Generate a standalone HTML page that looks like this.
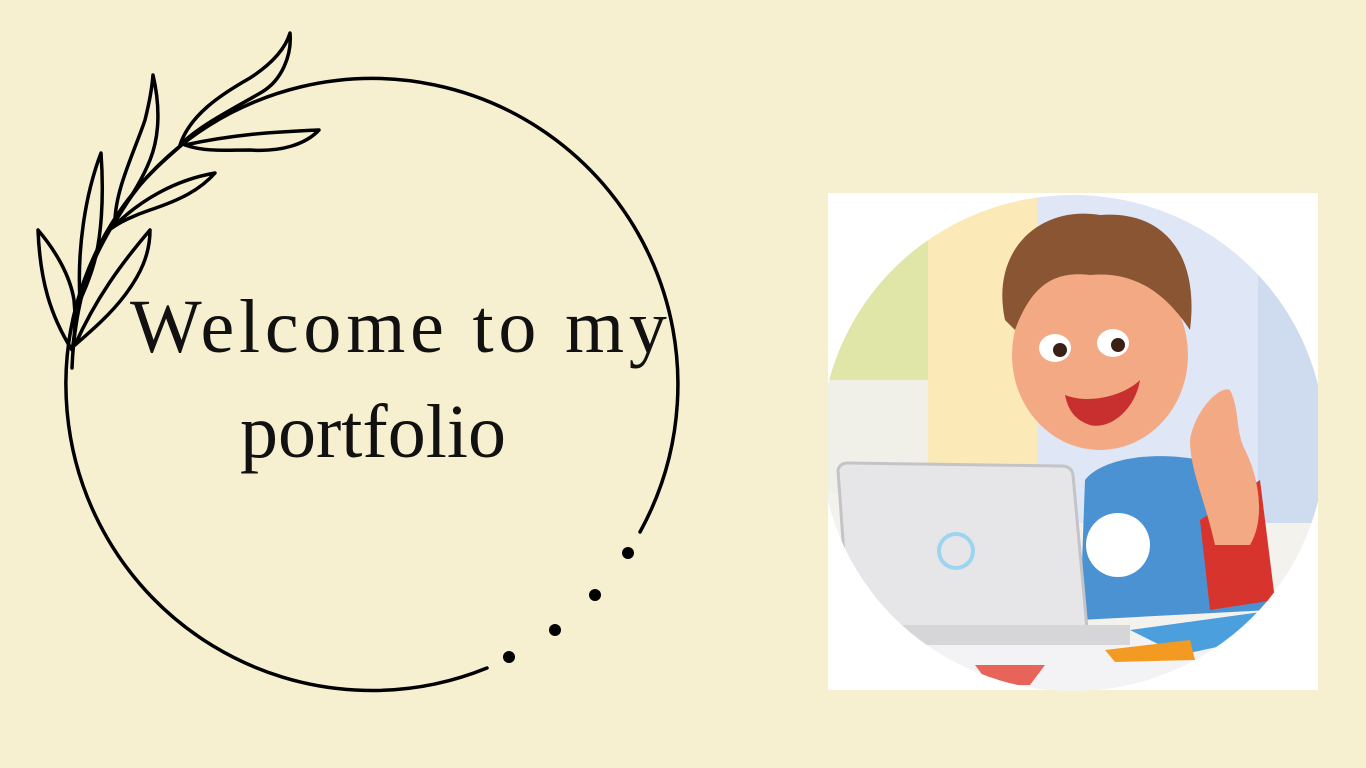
<!DOCTYPE html>
<html><head><style>
html,body{margin:0;padding:0}
body{width:1366px;height:768px;background:#f7f0d0;position:relative;overflow:hidden;font-family:"Liberation Serif",serif}
.t{position:absolute;color:#111;font-size:76px;white-space:nowrap;line-height:1}
</style></head><body>
<svg width="1366" height="768" style="position:absolute;left:0;top:0">
<g fill="none" stroke="#000" stroke-width="3.5" stroke-linecap="round" stroke-linejoin="round">
<path d="M640,532 A306,306 0 1 0 487,668" />
<path d="M72,368 C73,340 78,300 90,270 C100,245 120,210 140,185 C155,168 170,155 185,142"/>
<path d="M180,145 C190,115 220,95 250,78 C270,65 285,50 290,33 C292,55 282,80 262,92 C235,108 200,125 180,145 Z"/>
<path d="M185,145 C230,135 270,132 319,130 C305,145 280,152 250,150 C225,150 205,152 185,145 Z"/>
<path d="M112,228 C140,200 175,180 215,173 C200,190 180,200 150,210 C135,215 120,222 112,228 Z"/>
<path d="M115,222 C115,190 135,150 145,120 C150,100 152,88 153,75 C160,105 160,135 150,160 C140,185 125,205 115,222 Z"/>
<path d="M80,300 C77,250 85,195 101,153 C104,195 102,240 92,270 C88,282 84,292 80,300 Z"/>
<path d="M75,345 C95,300 120,265 150,230 C150,255 140,275 125,295 C110,315 90,332 75,345 Z"/>
<path d="M72,350 C50,315 40,280 38,230 C55,250 70,275 74,300 C76,320 75,335 72,350 Z"/>
</g>
<g fill="#000"><circle cx="628" cy="553" r="6"/><circle cx="595" cy="595" r="6"/><circle cx="555" cy="630" r="6"/><circle cx="509" cy="657" r="6"/></g>
<rect x="828" y="193" width="490" height="497" fill="#fff"/>
<clipPath id="c"><ellipse cx="1073" cy="443" rx="252" ry="248"/></clipPath>
<g clip-path="url(#c)">
<rect x="828" y="193" width="490" height="497" fill="#f4f2ec"/>
<rect x="828" y="193" width="100" height="300" fill="#f0f0e8"/>
<rect x="828" y="230" width="100" height="150" fill="#dfe6a8"/>
<rect x="928" y="193" width="110" height="330" fill="#fbeab8"/>
<rect x="1038" y="193" width="220" height="330" fill="#dfe6f5"/>
<rect x="1258" y="193" width="60" height="330" fill="#cfdcef"/>
<rect x="828" y="640" width="490" height="60" fill="#f3f3f5"/>
<path d="M1085,480 C1100,460 1150,450 1200,460 C1240,470 1260,520 1270,610 L1080,620 Z" fill="#4b92d2"/>
<path d="M1200,520 L1260,480 L1275,600 L1210,610 Z" fill="#d8342e"/>
<ellipse cx="1100" cy="355" rx="88" ry="95" fill="#f2a984"/>
<path d="M1005,320 C990,250 1040,205 1100,215 C1160,210 1200,250 1190,330 C1170,300 1140,270 1090,275 C1050,270 1030,290 1015,330 Z" fill="#8a5533"/>
<ellipse cx="1055" cy="348" rx="16" ry="14" fill="#fff"/><ellipse cx="1113" cy="343" rx="16" ry="14" fill="#fff"/>
<circle cx="1060" cy="350" r="7" fill="#3a2015"/><circle cx="1118" cy="345" r="7" fill="#3a2015"/>
<path d="M1065,395 C1090,405 1125,395 1140,380 C1135,410 1110,430 1090,425 C1075,420 1068,410 1065,395 Z" fill="#c8302f"/>
<path d="M1190,440 C1195,410 1220,385 1230,390 C1240,410 1235,430 1245,450 C1260,480 1265,520 1250,545 L1215,545 C1205,500 1190,470 1190,440 Z" fill="#f2a984"/>
<circle cx="1118" cy="545" r="32" fill="#fff"/>
<path d="M838,470 Q840,463 848,463 L1063,466 Q1072,467 1073,475 L1088,640 L850,640 Z" fill="#e6e6e8" stroke="#c4c4c8" stroke-width="3"/>
<rect x="850" y="625" width="280" height="20" fill="#d6d6d8"/>
<circle cx="956" cy="551" r="17" fill="none" stroke="#9dd4f0" stroke-width="4"/>
<path d="M1130,630 L1290,608 L1318,625 L1180,655 Z" fill="#4b9fdc"/>
<path d="M1105,650 L1190,640 L1195,660 L1115,662 Z" fill="#f39a22"/>
<path d="M975,665 L1045,665 L1030,685 L990,685 Z" fill="#e8645a"/>
</g>
</svg>
<div class="t" style="left:130px;top:289px;letter-spacing:4.8px">Welcome to my</div>
<div class="t" style="left:240px;top:394px;letter-spacing:0px">portfolio</div>
</body></html>
